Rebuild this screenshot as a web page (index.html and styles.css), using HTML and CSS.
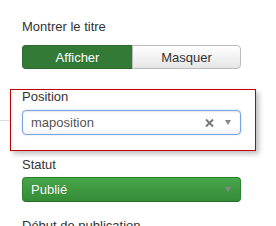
FILE: index.html
```html
<!DOCTYPE html>
<html lang="fr">
<head>
	<meta charset="UTF-8">
	<title>Options du module</title>
	<link rel="stylesheet" href="styles.css">
</head>
<body>
	<div id="options">
		<div class="field first">
			<div class="label">Montrer le titre</div>
			<div class="btn-group">
				<span class="btn active">Afficher</span>
				<span class="btn">Masquer</span>
			</div>
		</div>
		<div class="field highlight">
			<div class="label">Position</div>
			<div class="chzn">
				<span class="value">maposition</span>
				<svg class="clear" width="9" height="8" viewBox="0 0 9 8"><path d="M1 0.5 L8 7.5 M8 0.5 L1 7.5" stroke="#777" stroke-width="2"/></svg>
				<span class="caret"></span>
			</div>
		</div>
		<div class="field status">
			<div class="label">Statut</div>
			<div class="select green">
				<span class="value">Publié</span>
				<span class="caret"></span>
			</div>
		</div>
		<div class="field">
			<div class="label">Début de publication</div>
		</div>
	</div>
</body>
</html>
```
FILE: styles.css
```css
*{margin:0px;padding:0px;}
body{
	background: #fff;
	font-family: "Liberation Sans", Arial, sans-serif;
	font-size: 13px;
	color: #333;
}
#options{
	padding-top: 19px;
}
#options .field{
	padding: 0 22px;
	margin-bottom: 9px;
}
#options .label{
	line-height: 15px;
	height: 15px;
	margin-bottom: 5px;
}
#options .first{
	margin-bottom: 20px;
}
#options .first .label{
	margin-bottom: 11px;
}
.btn-group{
	display: flex;
	width: 219px;
	height: 24px;
}
.btn-group .btn{
	flex: 1;
	display: flex;
	align-items: center;
	justify-content: center;
	border: 1px solid #bbb;
	background: linear-gradient(#fff, #e6e6e6);
	color: #333;
}
.btn-group .btn:first-child{
	border-radius: 4px 0 0 4px;
	border-right: none;
}
.btn-group .btn:last-child{
	border-radius: 0 4px 4px 0;
}
.btn-group .btn.active{
	background: #327a36;
	border-color: #2a6a2e;
	color: #fff;
	flex: 0 0 110px;
	box-sizing: border-box;
}
#options .highlight{
	position: relative;
	margin: 0 20px 6px 10px;
	padding: 0 11px 15px 11px;
	border: 1px solid #c00000;
	box-shadow: 3px 3px 5px rgba(0,0,0,0.25);
}
#options .highlight::before{
	content: "";
	position: absolute;
	left: -11px;
	top: 30px;
	width: 10px;
	height: 1px;
	background: #ddd;
}
#options .highlight .label{
	margin-top: -1px;
	margin-bottom: 6px;
}
#options .status{
	margin-bottom: 16px;
}
.chzn, .select{
	display: flex;
	align-items: center;
	box-sizing: border-box;
	width: 219px;
	height: 25px;
	border-radius: 4px;
	padding: 0 9px 0 8px;
}
.chzn{
	border: 1px solid #7aa3e4;
	box-shadow: inset 0 1px 2px rgba(0,0,0,0.1), 0 0 2px rgba(82,168,236,0.4);
	background: linear-gradient(#fff 70%, #f3f3f3);
	color: #555;
}
.chzn .value, .select .value{
	flex: 1;
}
.chzn .clear{
	display: block;
	margin-right: 11px;
}
.caret{
	width: 0;
	height: 0;
	border-left: 3.5px solid transparent;
	border-right: 3.5px solid transparent;
	border-top: 5px solid #888;
}
.select.green{
	border: 1px solid #2d7f30;
	border-bottom-color: #256a28;
	background: linear-gradient(#49a64b, #348c37);
	color: #fff;
	text-shadow: 0 0 1px rgba(0,0,0,0.3);
}
.select.green .caret{
	border-top-color: #8a8a8a;
}
```
